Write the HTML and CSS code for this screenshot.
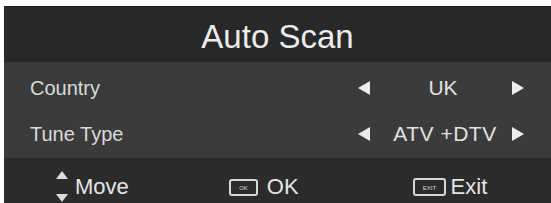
FILE: index.html
```html
<!DOCTYPE html>
<html>
<head>
<meta charset="utf-8">
<link rel="stylesheet" href="styles.css">
</head>
<body>
<div class="panel">
  <div class="title">Auto Scan</div>
  <div class="rows">
    <div class="row">
      <span class="label">Country</span>
      <svg class="arrow" width="14" height="14" viewBox="0 0 14 14"><polygon points="13,0 13,14 1,7" fill="#ececec"/></svg>
      <span class="value">UK</span>
      <svg class="arrow" width="14" height="14" viewBox="0 0 14 14"><polygon points="1,0 1,14 13,7" fill="#ececec"/></svg>
    </div>
    <div class="row">
      <span class="label">Tune Type</span>
      <svg class="arrow" width="14" height="14" viewBox="0 0 14 14"><polygon points="13,0 13,14 1,7" fill="#ececec"/></svg>
      <span class="value wide">ATV +DTV</span>
      <svg class="arrow" width="14" height="14" viewBox="0 0 14 14"><polygon points="1,0 1,14 13,7" fill="#ececec"/></svg>
    </div>
  </div>
  <div class="footer">
    <div class="hint move">
      <svg width="14" height="32" viewBox="0 0 14 32"><polygon points="7,0 13,8 1,8" fill="#dcdcdc"/><polygon points="1,23 13,23 7,31" fill="#dcdcdc"/></svg>
      <span>Move</span>
    </div>
    <div class="hint ok">
      <svg width="29" height="17" viewBox="0 0 29 17"><rect x="1" y="1" width="27" height="15" rx="2" fill="none" stroke="#d8d8d8" stroke-width="2"/><text x="14.5" y="11" font-size="6" font-family="Liberation Sans, sans-serif" fill="#d8d8d8" text-anchor="middle">OK</text></svg>
      <span>OK</span>
    </div>
    <div class="hint exit">
      <svg width="33" height="18" viewBox="0 0 33 18"><rect x="1" y="1" width="31" height="16" rx="2" fill="none" stroke="#d8d8d8" stroke-width="2"/><text x="16.5" y="11.5" font-size="6" font-family="Liberation Sans, sans-serif" fill="#d8d8d8" text-anchor="middle">EXIT</text></svg>
      <span>Exit</span>
    </div>
  </div>
</div>
</body>
</html>
```
FILE: styles.css
```css
html, body {
  margin: 0;
  padding: 0;
  background: #ffffff;
  overflow: hidden;
}
body {
  padding: 6px 0 0 4px;
  font-family: "Liberation Sans", Arial, sans-serif;
  color: #e4e4e4;
}
.panel {
  display: flex;
  flex-direction: column;
}
.title {
  height: 53px;
  padding-top: 2px;
  line-height: 55px;
  text-align: center;
  font-size: 33px;
  background: #282828;
  border-top: 1px solid #1e1e1e;
  box-sizing: content-box;
  color: #ececec;
}
.rows {
  background: #3b3b3b;
  padding-top: 3px;
  height: 93px;
}
.row {
  display: grid;
  grid-template-columns: 1fr 14px 140px 14px;
  align-items: center;
  height: 46px;
  padding: 0 26px 0 26px;
  font-size: 20px;
}
.label {
  line-height: 46px;
  color: #dadada;
}
.value {
  justify-self: center;
  padding-left: 4px;
  color: #e2e2e2;
  font-size: 21px;
}
.value.wide {
  letter-spacing: 0.5px;
  padding-left: 8px;
}
.arrow {
  display: block;
}
.footer {
  background: #2b2b2b;
  height: 46px;
  display: flex;
  align-items: flex-start;
  padding-left: 51px;
}
.hint {
  display: flex;
  align-items: center;
  font-size: 22px;
  color: #e6e6e6;
}
.hint svg {
  display: block;
}
.move {
  margin-top: 13px;
  gap: 6px;
}
.ok {
  margin-top: 16px;
  margin-left: 100px;
  gap: 9px;
}
.exit {
  margin-top: 16px;
  margin-left: 114px;
  gap: 5px;
}
```
